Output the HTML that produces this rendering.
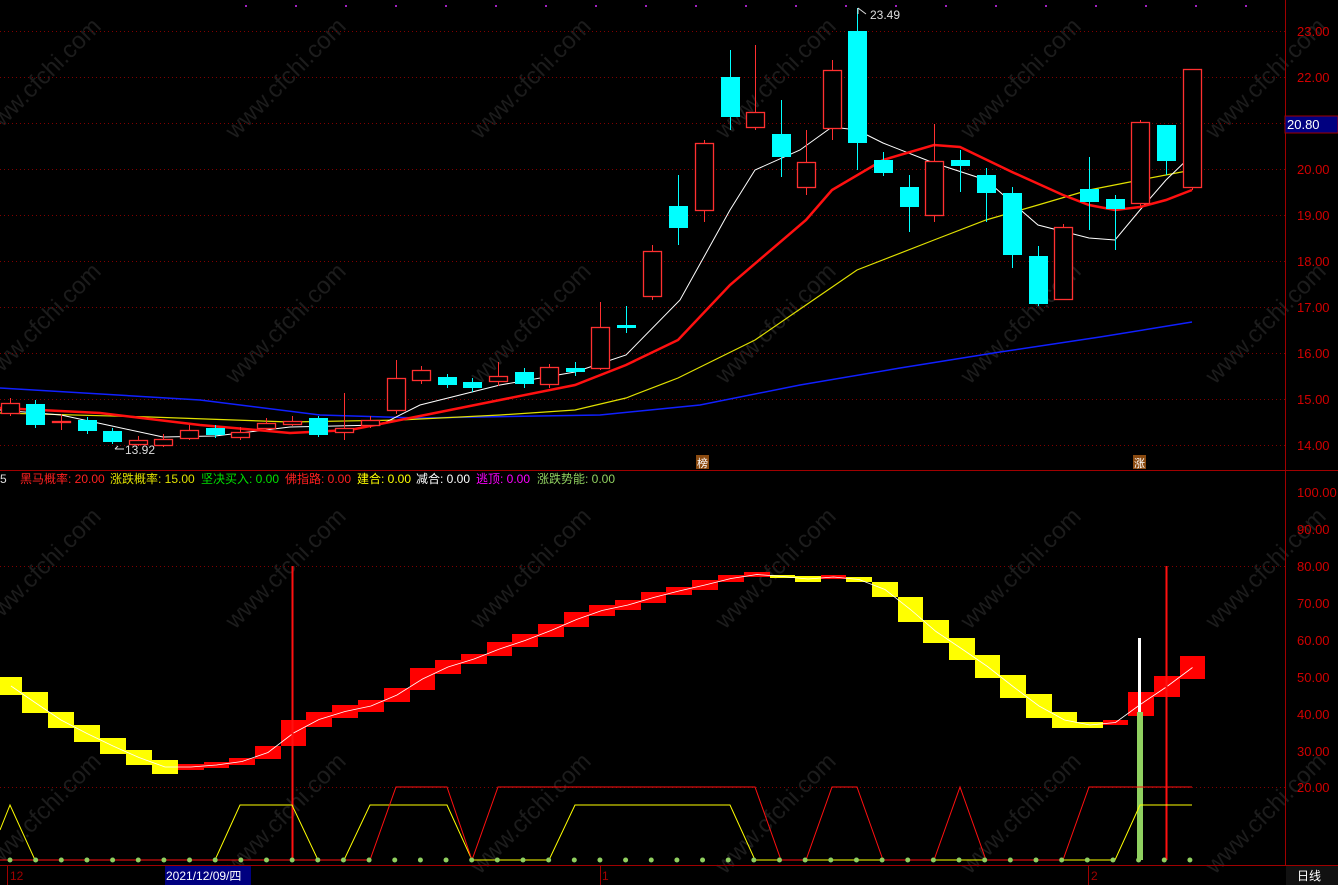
<!DOCTYPE html>
<html><head><meta charset="utf-8"><style>
html,body{margin:0;padding:0;background:#000;width:1338px;height:885px;overflow:hidden}
svg{display:block;overflow:hidden}
text{font-family:"Liberation Sans","Noto Sans CJK SC",sans-serif}
</style></head><body>
<svg id="s" width="1338" height="885" xmlns="http://www.w3.org/2000/svg">
<rect width="1338" height="885" fill="#000"/>
<g id="g"></g>
<line x1="1285.5" y1="0" x2="1285.5" y2="866" stroke="#a00000"/>
<line x1="0" y1="470.5" x2="1338" y2="470.5" stroke="#a00000"/>
<line x1="0" y1="865.5" x2="1338" y2="865.5" stroke="#a00000"/>
<g font-size="13" fill="#d00000">
<text x="1297" y="36">23.00</text><text x="1297" y="82">22.00</text>
<text x="1297" y="174">20.00</text><text x="1297" y="220">19.00</text><text x="1297" y="266">18.00</text>
<text x="1297" y="312">17.00</text><text x="1297" y="358">16.00</text><text x="1297" y="404">15.00</text><text x="1297" y="450">14.00</text>
<text x="1297" y="497">100.00</text><text x="1297" y="534">90.00</text><text x="1297" y="571">80.00</text>
<text x="1297" y="608">70.00</text><text x="1297" y="645">60.00</text><text x="1297" y="682">50.00</text>
<text x="1297" y="719">40.00</text><text x="1297" y="756">30.00</text><text x="1297" y="792">20.00</text>
</g>
<rect x="1285" y="116" width="53" height="17" fill="#000080" stroke="#a00000"/>
<text x="1287" y="129" font-size="13" fill="#fff">20.80</text>
<text x="870" y="19" font-size="12" fill="#ddd">23.49</text>
<text x="125" y="454" font-size="12" fill="#ddd">13.92</text>
<path d="M858 8 L858 14 M858 8 L866 14 M115 449 L124 449 M115 449 L118 446" stroke="#ddd" fill="none"/>
<rect x="696" y="455" width="13" height="14" fill="#8a4a10"/><text x="697" y="467" font-size="11" fill="#fff">榜</text>
<rect x="1133" y="455" width="13" height="14" fill="#8a4a10"/><text x="1134" y="467" font-size="11" fill="#fff">涨</text>
<g font-size="12">
<text x="0" y="483" fill="#ddd">5</text>
<text x="20" y="483" fill="#ff2020">黑马概率: 20.00</text>
<text x="110" y="483" fill="#e0e000">涨跌概率: 15.00</text>
<text x="201" y="483" fill="#00e000">坚决买入: 0.00</text>
<text x="285" y="483" fill="#ff2020">佛指路: 0.00</text>
<text x="357" y="483" fill="#ffff00">建合: 0.00</text>
<text x="416" y="483" fill="#fff">减合: 0.00</text>
<text x="476" y="483" fill="#ff00ff">逃顶: 0.00</text>
<text x="537" y="483" fill="#90d060">涨跌势能: 0.00</text>
</g>
<g font-size="12">
<line x1="7.5" y1="866" x2="7.5" y2="885" stroke="#a00000"/>
<text x="10" y="880" fill="#a00000">12</text>
<rect x="165" y="866" width="86" height="19" fill="#000080"/>
<text x="166" y="880" fill="#fff">2021/12/09/四</text>
<line x1="600.5" y1="866" x2="600.5" y2="885" stroke="#a00000"/>
<text x="602" y="880" fill="#a00000">1</text>
<line x1="1088.5" y1="866" x2="1088.5" y2="885" stroke="#a00000"/>
<text x="1091" y="880" fill="#a00000">2</text>
<rect x="1286" y="866" width="52" height="19" fill="#111"/>
<text x="1297" y="880" fill="#fff">日线</text>
</g>
</svg>
<script>
var g=document.getElementById('g'),h='';
function L(a,c,w){h+='<polyline fill="none" stroke="'+c+'" stroke-width="'+w+'" points="'+a.map(p=>p.join(',')).join(' ')+'"/>';}
for(var i=0;i<6;i++)for(var j=0;j<4;j++){var wx=-10+i*245,wy=140+j*245;if(wx>1250||wy>880)continue;h+='<text x="'+wx+'" y="'+wy+'" font-size="24" fill="#1c1c1c" transform="rotate(-45 '+wx+' '+wy+')">www.cfchi.com</text>';}
[31,77,123,169,215,261,307,353,399,445].forEach(y=>h+='<line x1="0" y1="'+(y+.5)+'" x2="1285" y2="'+(y+.5)+'" stroke="#800000" stroke-dasharray="1 3"/>');
[566,787].forEach(y=>h+='<line x1="0" y1="'+(y+.5)+'" x2="1285" y2="'+(y+.5)+'" stroke="#800000" stroke-dasharray="1 3"/>');
for(var x=245;x<1285;x+=50)h+='<rect x="'+x+'" y="5" width="2" height="2" fill="#a020c0"/>';
L([[0,388],[200,400],[320,415],[420,418],[600,415],[700,405],[800,385],[900,368],[1000,352],[1100,337],[1192,322]],'#1020ff',1.5);
L([[0,413],[150,417],[290,422],[400,420],[500,415],[575,410],[626,398],[678,378],[755,340],[806,305],[857,270],[934,240],[986,220],[1038,205],[1089,190],[1140,180],[1192,170]],'#e0e000',1.2);
L([[0,410],[61,415],[112,426],[163,437],[215,436],[290,427],[380,425],[420,405],[500,385],[575,372],[626,355],[680,300],[730,210],[755,170],[800,150],[832,127],[857,130],[883,143],[934,163],[986,180],[1038,225],[1089,238],[1115,240],[1140,210],[1166,180],[1192,155]],'#fff',1);
L([[0,408],[100,413],[200,425],[290,433],[350,430],[400,420],[450,410],[500,400],[575,385],[626,365],[678,340],[730,285],[806,220],[832,190],[883,160],[934,145],[960,147],[1012,172],[1063,195],[1089,205],[1115,210],[1140,207],[1166,200],[1192,190]],'#ff1010',2.5);
var C=[[10,403,413,1,398,416],[35,404,425,0,400,428],[61,421,422,1,414,430],[87,420,431,0,417,434],[112,431,442,0,428,444],[138,440,444,1,436,446],[163,439,445,1,434,447],[189,430,438,1,425,440],[215,428,435,0,425,438],[240,432,437,1,427,440],[266,423,428,1,418,430],[292,421,424,1,416,426],[318,418,435,0,416,437],[344,428,432,1,393,440],[370,420,425,1,416,428],[396,378,410,1,360,414],[421,370,380,1,366,384],[447,377,385,0,374,388],[472,382,388,0,378,392],[498,376,381,1,362,386],[524,372,384,0,368,388],[549,367,384,1,364,388],[575,368,372,0,362,376],[600,327,368,1,302,370],[626,325,328,0,306,333],[652,251,296,1,245,300],[678,206,228,0,175,245],[704,143,210,1,140,222],[730,77,117,0,50,130],[755,112,127,1,45,130],[781,134,157,0,100,177],[806,162,187,1,130,195],[832,70,128,1,60,140],[857,31,143,0,8,170],[883,160,173,0,152,176],[909,187,207,0,175,232],[934,161,215,1,124,222],[960,160,166,0,150,192],[986,175,193,0,168,222],[1012,193,255,0,187,268],[1038,256,304,0,246,306],[1063,227,299,1,224,300],[1089,189,202,0,157,230],[1115,199,209,0,195,250],[1140,122,203,1,120,206],[1166,125,161,0,125,175],[1192,69,187,1,69,190]];
C.forEach(c=>{var col=c[3]?'#ff3030':'#00ffff';
 h+='<line x1="'+(c[0]+.5)+'" y1="'+c[4]+'" x2="'+(c[0]+.5)+'" y2="'+c[5]+'" stroke="'+col+'"/>';
 if(c[3])h+='<rect x="'+(c[0]-8.5)+'" y="'+(c[1]+.5)+'" width="18" height="'+Math.max(c[2]-c[1],1)+'" fill="#000" stroke="'+col+'" stroke-width="1.3"/>';
 else h+='<rect x="'+(c[0]-9)+'" y="'+c[1]+'" width="19" height="'+Math.max(c[2]-c[1],2)+'" fill="'+col+'"/>';});
var B=[[0,22,677,695,0],[22,48,692,713,0],[48,74,712,728,0],[74,100,725,742,0],[100,126,738,754,0],[126,152,750,765,0],[152,178,760,774,0],[178,204,764,770,1],[204,229,762,768,1],[229,255,758,765,1],[255,281,746,759,1],[281,306,720,746,1],[306,332,712,727,1],[332,358,705,718,1],[358,384,700,712,1],[384,410,688,702,1],[410,435,668,690,1],[435,461,660,674,1],[461,487,654,664,1],[487,512,642,656,1],[512,538,634,647,1],[538,564,624,637,1],[564,589,612,627,1],[589,615,605,616,1],[615,641,600,610,1],[641,666,592,603,1],[666,692,587,595,1],[692,718,580,590,1],[718,744,575,582,1],[744,770,572,577,1],[770,795,575,578,0],[795,821,576,582,0],[821,846,575,579,1],[846,872,577,582,0],[872,898,582,597,0],[898,923,597,622,0],[923,949,620,643,0],[949,975,638,660,0],[975,1000,655,678,0],[1000,1026,675,698,0],[1026,1052,694,718,0],[1052,1077,712,728,0],[1077,1103,722,728,0],[1103,1128,720,725,1],[1128,1154,692,716,1],[1154,1180,676,697,1],[1180,1205,656,679,1]];
B.forEach(b=>h+='<rect x="'+b[0]+'" y="'+b[2]+'" width="'+(b[1]-b[0])+'" height="'+(b[3]-b[2])+'" fill="'+(b[4]?'#ff0000':'#ffff00')+'"/>');
L(B.map(b=>[(b[0]+b[1])/2,(b[2]+b[3])/2]),'#fff',0.8);
h+='<line x1="292.5" y1="566" x2="292.5" y2="860" stroke="#ff1010" stroke-width="2"/><line x1="1166.5" y1="566" x2="1166.5" y2="860" stroke="#ff1010" stroke-width="2"/>';
h+='<rect x="1138" y="638" width="3" height="222" fill="#fff"/><rect x="1137" y="712" width="6" height="148" fill="#90d060"/>';
L([[0,830],[10,805],[35,860],[215,860],[240,805],[292,805],[318,860],[344,860],[370,805],[447,805],[472,860],[549,860],[575,805],[730,805],[755,860],[1115,860],[1140,805],[1192,805]],'#ffff00',1);
L([[0,860],[370,860],[396,787],[447,787],[472,860],[498,787],[755,787],[781,860],[806,860],[832,787],[857,787],[883,860],[934,860],[960,787],[986,860],[1063,860],[1089,787],[1192,787]],'#ff1010',1);
for(var i=0;i<47;i++){var x=10+i*25.65;h+='<circle cx="'+x+'" cy="860" r="2.5" fill="#90d060"/>';}
g.innerHTML=h;
</script>
</body></html>
